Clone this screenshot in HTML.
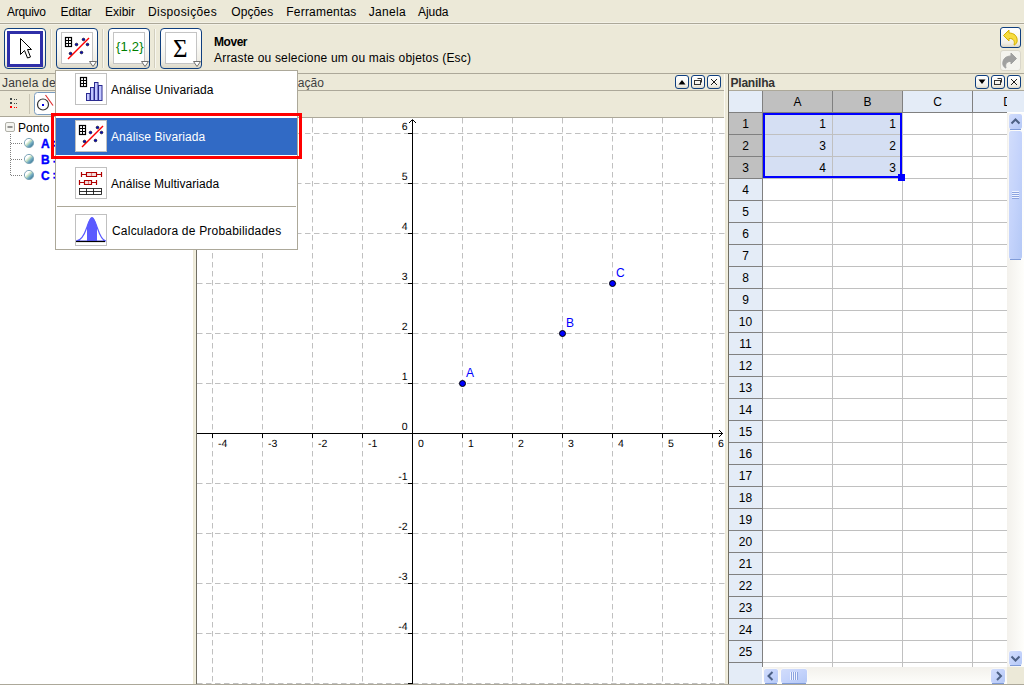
<!DOCTYPE html>
<html><head><meta charset="utf-8"><title>GeoGebra</title>
<style>
html,body{margin:0;padding:0;}
body{width:1024px;height:685px;overflow:hidden;position:relative;background:#ECE9D8;font-family:"Liberation Sans",sans-serif;font-size:12px;color:#000;}
.a{position:absolute;}
.t{position:absolute;white-space:nowrap;line-height:14px;}
svg{position:absolute;left:0;top:0;}
</style></head><body>

<div class="t" style="left:7px;top:5px;letter-spacing:-0.283px;">Arquivo</div>
<div class="t" style="left:60.5px;top:5px;letter-spacing:-0.060px;">Editar</div>
<div class="t" style="left:105px;top:5px;letter-spacing:0.000px;">Exibir</div>
<div class="t" style="left:148px;top:5px;letter-spacing:0.400px;">Disposições</div>
<div class="t" style="left:231.2px;top:5px;letter-spacing:0.120px;">Opções</div>
<div class="t" style="left:286.3px;top:5px;letter-spacing:0.200px;">Ferramentas</div>
<div class="t" style="left:368.8px;top:5px;letter-spacing:0.320px;">Janela</div>
<div class="t" style="left:418px;top:5px;letter-spacing:-0.050px;">Ajuda</div>
<div class="a" style="left:0;top:22px;width:1024px;height:1px;background:#F3F1E6"></div>
<div class="a" style="left:0;top:23px;width:1024px;height:1px;background:#ACA899"></div>
<div class="a" style="left:0;top:24px;width:1024px;height:1px;background:#F3F1E6"></div>
<div class="a" style="left:4px;top:28px;width:40px;height:39px;border:1px solid #0F3F7F;border-radius:4px;background:linear-gradient(#FFFFFF 0%,#FAFAF7 40%,#F0EEE6 80%,#DCD8C8 100%)"></div>
<div class="a" style="left:56px;top:28px;width:40px;height:39px;border:1px solid #0F3F7F;border-radius:4px;background:linear-gradient(#FFFFFF 0%,#FAFAF7 40%,#F0EEE6 80%,#DCD8C8 100%)"></div>
<div class="a" style="left:108px;top:28px;width:40px;height:39px;border:1px solid #0F3F7F;border-radius:4px;background:linear-gradient(#FFFFFF 0%,#FAFAF7 40%,#F0EEE6 80%,#DCD8C8 100%)"></div>
<div class="a" style="left:160px;top:28px;width:40px;height:39px;border:1px solid #0F3F7F;border-radius:4px;background:linear-gradient(#FFFFFF 0%,#FAFAF7 40%,#F0EEE6 80%,#DCD8C8 100%)"></div>
<div class="a" style="left:50px;top:29px;width:1px;height:39px;background:#D2CFBF"></div>
<div class="a" style="left:51px;top:29px;width:1px;height:39px;background:#F8F7F0"></div>
<div class="a" style="left:102px;top:29px;width:1px;height:39px;background:#D2CFBF"></div>
<div class="a" style="left:103px;top:29px;width:1px;height:39px;background:#F8F7F0"></div>
<div class="a" style="left:154px;top:29px;width:1px;height:39px;background:#D2CFBF"></div>
<div class="a" style="left:155px;top:29px;width:1px;height:39px;background:#F8F7F0"></div>
<div class="a" style="left:7px;top:31px;width:30px;height:30px;border:3px solid #2F2FA8;background:#fff"></div>
<svg width="1024" height="685" style="pointer-events:none">
<path d="M20.5,38.5 L20.5,54.5 L24.5,50.5 L27.5,58 L30.5,57 L27.5,49.5 L31.5,49.5 Z" fill="#fff" stroke="#000" stroke-width="1" stroke-linejoin="miter"/>
</svg>
<div class="a" style="left:61px;top:32px;width:30px;height:30px;border:1px solid #C4C4C4;background:#fff"></div>
<div class="a" style="left:113px;top:32px;width:30px;height:30px;border:1px solid #C4C4C4;background:#fff"></div>
<div class="a" style="left:165px;top:32px;width:30px;height:30px;border:1px solid #C4C4C4;background:#fff"></div>
<svg width="1024" height="685"><path d="M89.5,61.5 L96.5,61.5 L93,66.5 Z" fill="#fff" stroke="#707070" stroke-width="1"/><path d="M141.5,61.5 L148.5,61.5 L145,66.5 Z" fill="#fff" stroke="#707070" stroke-width="1"/><path d="M193.5,61.5 L200.5,61.5 L197,66.5 Z" fill="#fff" stroke="#707070" stroke-width="1"/></svg>
<svg width="1024" height="685">
<rect x="65.5" y="37.5" width="6" height="9" fill="#fff" stroke="#000" stroke-width="1.2"/>
<path d="M68.5,37 V47 M65,40.5 H72 M65,43.5 H72" stroke="#000" stroke-width="1"/>
<line x1="68" y1="59" x2="89" y2="38" stroke="#FF0000" stroke-width="1.5"/>
<g fill="#0000C0" stroke="#000" stroke-width="0.6">
<circle cx="70.5" cy="53.5" r="1.35"/><circle cx="76.5" cy="44.5" r="1.35"/><circle cx="83.5" cy="39.5" r="1.35"/><circle cx="87.5" cy="44.5" r="1.35"/><circle cx="81.5" cy="52.5" r="1.35"/>
</g>
</svg>
<div class="t" style="left:116px;top:40px;font-size:13px;color:#008000;letter-spacing:0.2px">{1,2}</div>
<div class="t" style="left:173px;top:35px;font-family:'Liberation Serif',serif;font-size:25px;line-height:28px;color:#000">&#931;</div>
<div class="t" style="left:214px;top:35px;font-weight:bold;letter-spacing:-0.450px;">Mover</div>
<div class="t" style="left:214px;top:51px;letter-spacing:0.202px;">Arraste ou selecione um ou mais objetos (Esc)</div>
<div class="a" style="left:1000px;top:27px;width:19px;height:19px;border:1px solid #0F3F7F;border-radius:3px;background:linear-gradient(#FFFFFF 0%,#FAFAF7 40%,#F0EEE6 80%,#DCD8C8 100%)"></div>
<div class="a" style="left:1000px;top:50px;width:19px;height:19px;border:1px solid #DAD7CB;border-radius:3px;background:#F4F3EE"></div>
<svg width="1024" height="685">
<path d="M1003.5,35.5 L1009,30 L1009,33 C1014,33 1018,36 1017,42 C1016,44 1015,45 1014,45 C1015,42 1014,38 1009,38.5 L1009,41 Z" fill="#F7DC40" stroke="#D4B000" stroke-width="1"/>
<path d="M1016.5,58.5 L1011,53 L1011,56 C1006,56 1002,59 1003,65 C1004,67 1005,68 1006,68 C1005,65 1006,61 1011,61.5 L1011,64 Z" fill="#A0A0A0" stroke="#A0A0A0" stroke-width="1"/>
</svg>
<div class="a" style="left:0px;top:73px;width:1024px;height:1px;background:#ACA899"></div>
<div class="a" style="left:0px;top:90px;width:193px;height:1px;background:#ACA899"></div>
<div class="a" style="left:0px;top:116px;width:193px;height:1px;background:#ACA899"></div>
<div class="a" style="left:0px;top:117px;width:193px;height:567px;background:#FFFFFF"></div>
<div class="a" style="left:193px;top:74px;width:3px;height:610px;background:linear-gradient(90deg,#E9E5D3,#F4F1E1)"></div>
<div class="a" style="left:196px;top:74px;width:1px;height:610px;background:#716F64"></div>
<div class="a" style="left:197px;top:73px;width:528px;height:1px;background:#ACA899"></div>
<div class="a" style="left:197px;top:90px;width:528px;height:1px;background:#ACA899"></div>
<div class="a" style="left:197px;top:117px;width:528px;height:1px;background:#ACA899"></div>
<div class="a" style="left:725px;top:74px;width:3px;height:610px;background:linear-gradient(90deg,#E9E5D3,#F4F1E1)"></div>
<div class="a" style="left:728px;top:74px;width:1px;height:610px;background:#716F64"></div>
<div class="a" style="left:724px;top:74px;width:1px;height:44px;background:#FBFAF4"></div>
<div class="a" style="left:729px;top:73px;width:295px;height:1px;background:#ACA899"></div>
<div class="a" style="left:729px;top:90px;width:295px;height:1px;background:#ACA899"></div>
<div class="a" style="left:0px;top:684px;width:1024px;height:1px;background:#ACA899"></div>
<div class="t" style="left:2px;top:76px;color:#3A3A3A;letter-spacing:0.2px;">Janela de Álgebra</div>
<div class="t" style="left:199px;top:76px;color:#404040;letter-spacing:0.119px;">Janela de Visualização</div>
<div class="t" style="left:730.5px;top:76px;font-weight:bold;color:#333333;letter-spacing:-0.229px;">Planilha</div>
<div class="a" style="left:675px;top:75px;width:12px;height:12px;border:1px solid #0F3F7F;border-radius:3px;background:linear-gradient(#FFFFFF 0%,#FAFAF7 40%,#F0EEE6 80%,#DCD8C8 100%)"></div>
<div class="a" style="left:691px;top:75px;width:12px;height:12px;border:1px solid #0F3F7F;border-radius:3px;background:linear-gradient(#FFFFFF 0%,#FAFAF7 40%,#F0EEE6 80%,#DCD8C8 100%)"></div>
<div class="a" style="left:707px;top:75px;width:12px;height:12px;border:1px solid #0F3F7F;border-radius:3px;background:linear-gradient(#FFFFFF 0%,#FAFAF7 40%,#F0EEE6 80%,#DCD8C8 100%)"></div>
<div class="a" style="left:975px;top:75px;width:12px;height:12px;border:1px solid #0F3F7F;border-radius:3px;background:linear-gradient(#FFFFFF 0%,#FAFAF7 40%,#F0EEE6 80%,#DCD8C8 100%)"></div>
<div class="a" style="left:991px;top:75px;width:12px;height:12px;border:1px solid #0F3F7F;border-radius:3px;background:linear-gradient(#FFFFFF 0%,#FAFAF7 40%,#F0EEE6 80%,#DCD8C8 100%)"></div>
<div class="a" style="left:1007px;top:75px;width:12px;height:12px;border:1px solid #0F3F7F;border-radius:3px;background:linear-gradient(#FFFFFF 0%,#FAFAF7 40%,#F0EEE6 80%,#DCD8C8 100%)"></div>
<svg width="1024" height="685"><path d="M678.5,84.5 L685.5,84.5 L682,80 Z" fill="#000"/><path d="M978.5,79.5 L985.5,79.5 L982,84 Z" fill="#000"/><rect x="694.5" y="80.5" width="6" height="4" fill="none" stroke="#333" stroke-width="1"/><path d="M697.5,78.5 H701.5 V82.5" fill="none" stroke="#333" stroke-width="1"/><rect x="994.5" y="80.5" width="6" height="4" fill="none" stroke="#333" stroke-width="1"/><path d="M997.5,78.5 H1001.5 V82.5" fill="none" stroke="#333" stroke-width="1"/><path d="M711,79 L717,85 M717,79 L711,85" stroke="#000" stroke-width="0.9"/><path d="M1011,79 L1017,85 M1017,79 L1011,85" stroke="#000" stroke-width="0.9"/></svg>
<svg width="1024" height="685"><rect x="197" y="118" width="528" height="566" fill="#fff"/><line x1="212.5" y1="118" x2="212.5" y2="684" stroke="#C0C0C0" stroke-width="1" stroke-dasharray="5.5 3.5"/><line x1="262.5" y1="118" x2="262.5" y2="684" stroke="#C0C0C0" stroke-width="1" stroke-dasharray="5.5 3.5"/><line x1="312.5" y1="118" x2="312.5" y2="684" stroke="#C0C0C0" stroke-width="1" stroke-dasharray="5.5 3.5"/><line x1="362.5" y1="118" x2="362.5" y2="684" stroke="#C0C0C0" stroke-width="1" stroke-dasharray="5.5 3.5"/><line x1="462.5" y1="118" x2="462.5" y2="684" stroke="#C0C0C0" stroke-width="1" stroke-dasharray="5.5 3.5"/><line x1="512.5" y1="118" x2="512.5" y2="684" stroke="#C0C0C0" stroke-width="1" stroke-dasharray="5.5 3.5"/><line x1="562.5" y1="118" x2="562.5" y2="684" stroke="#C0C0C0" stroke-width="1" stroke-dasharray="5.5 3.5"/><line x1="612.5" y1="118" x2="612.5" y2="684" stroke="#C0C0C0" stroke-width="1" stroke-dasharray="5.5 3.5"/><line x1="662.5" y1="118" x2="662.5" y2="684" stroke="#C0C0C0" stroke-width="1" stroke-dasharray="5.5 3.5"/><line x1="712.5" y1="118" x2="712.5" y2="684" stroke="#C0C0C0" stroke-width="1" stroke-dasharray="5.5 3.5"/><line x1="197" y1="683.5" x2="725" y2="683.5" stroke="#C0C0C0" stroke-width="1" stroke-dasharray="5.5 3.5"/><line x1="197" y1="633.5" x2="725" y2="633.5" stroke="#C0C0C0" stroke-width="1" stroke-dasharray="5.5 3.5"/><line x1="197" y1="583.5" x2="725" y2="583.5" stroke="#C0C0C0" stroke-width="1" stroke-dasharray="5.5 3.5"/><line x1="197" y1="533.5" x2="725" y2="533.5" stroke="#C0C0C0" stroke-width="1" stroke-dasharray="5.5 3.5"/><line x1="197" y1="483.5" x2="725" y2="483.5" stroke="#C0C0C0" stroke-width="1" stroke-dasharray="5.5 3.5"/><line x1="197" y1="383.5" x2="725" y2="383.5" stroke="#C0C0C0" stroke-width="1" stroke-dasharray="5.5 3.5"/><line x1="197" y1="333.5" x2="725" y2="333.5" stroke="#C0C0C0" stroke-width="1" stroke-dasharray="5.5 3.5"/><line x1="197" y1="283.5" x2="725" y2="283.5" stroke="#C0C0C0" stroke-width="1" stroke-dasharray="5.5 3.5"/><line x1="197" y1="233.5" x2="725" y2="233.5" stroke="#C0C0C0" stroke-width="1" stroke-dasharray="5.5 3.5"/><line x1="197" y1="183.5" x2="725" y2="183.5" stroke="#C0C0C0" stroke-width="1" stroke-dasharray="5.5 3.5"/><line x1="197" y1="133.5" x2="725" y2="133.5" stroke="#C0C0C0" stroke-width="1" stroke-dasharray="5.5 3.5"/><line x1="197" y1="433.5" x2="723" y2="433.5" stroke="#000" stroke-width="1"/><line x1="412.5" y1="120" x2="412.5" y2="684" stroke="#000" stroke-width="1"/><path d="M409,123 L412.5,119.5 L416,123" fill="none" stroke="#000" stroke-width="1"/><path d="M719,430 L722.5,433.5 L719,437" fill="none" stroke="#000" stroke-width="1"/><line x1="212.5" y1="434" x2="212.5" y2="438" stroke="#000" stroke-width="1"/><line x1="262.5" y1="434" x2="262.5" y2="438" stroke="#000" stroke-width="1"/><line x1="312.5" y1="434" x2="312.5" y2="438" stroke="#000" stroke-width="1"/><line x1="362.5" y1="434" x2="362.5" y2="438" stroke="#000" stroke-width="1"/><line x1="462.5" y1="434" x2="462.5" y2="438" stroke="#000" stroke-width="1"/><line x1="512.5" y1="434" x2="512.5" y2="438" stroke="#000" stroke-width="1"/><line x1="562.5" y1="434" x2="562.5" y2="438" stroke="#000" stroke-width="1"/><line x1="612.5" y1="434" x2="612.5" y2="438" stroke="#000" stroke-width="1"/><line x1="662.5" y1="434" x2="662.5" y2="438" stroke="#000" stroke-width="1"/><line x1="712.5" y1="434" x2="712.5" y2="438" stroke="#000" stroke-width="1"/><line x1="408" y1="683.5" x2="412" y2="683.5" stroke="#000" stroke-width="1"/><line x1="408" y1="633.5" x2="412" y2="633.5" stroke="#000" stroke-width="1"/><line x1="408" y1="583.5" x2="412" y2="583.5" stroke="#000" stroke-width="1"/><line x1="408" y1="533.5" x2="412" y2="533.5" stroke="#000" stroke-width="1"/><line x1="408" y1="483.5" x2="412" y2="483.5" stroke="#000" stroke-width="1"/><line x1="408" y1="383.5" x2="412" y2="383.5" stroke="#000" stroke-width="1"/><line x1="408" y1="333.5" x2="412" y2="333.5" stroke="#000" stroke-width="1"/><line x1="408" y1="283.5" x2="412" y2="283.5" stroke="#000" stroke-width="1"/><line x1="408" y1="233.5" x2="412" y2="233.5" stroke="#000" stroke-width="1"/><line x1="408" y1="183.5" x2="412" y2="183.5" stroke="#000" stroke-width="1"/><line x1="408" y1="133.5" x2="412" y2="133.5" stroke="#000" stroke-width="1"/><g font-family="Liberation Sans" fill="#000" text-rendering="geometricPrecision"><text x="218" y="447" font-size="10.5">-4</text><text x="268" y="447" font-size="10.5">-3</text><text x="318" y="447" font-size="10.5">-2</text><text x="368" y="447" font-size="10.5">-1</text><text x="418" y="447" font-size="10.5">0</text><text x="468" y="447" font-size="10.5">1</text><text x="518" y="447" font-size="10.5">2</text><text x="568" y="447" font-size="10.5">3</text><text x="618" y="447" font-size="10.5">4</text><text x="668" y="447" font-size="10.5">5</text><text x="718" y="447" font-size="10.5">6</text><text x="407.5" y="630" font-size="10.5" text-anchor="end">-4</text><text x="407.5" y="580" font-size="10.5" text-anchor="end">-3</text><text x="407.5" y="530" font-size="10.5" text-anchor="end">-2</text><text x="407.5" y="480" font-size="10.5" text-anchor="end">-1</text><text x="407.5" y="430" font-size="10.5" text-anchor="end">0</text><text x="407.5" y="380" font-size="10.5" text-anchor="end">1</text><text x="407.5" y="330" font-size="10.5" text-anchor="end">2</text><text x="407.5" y="280" font-size="10.5" text-anchor="end">3</text><text x="407.5" y="230" font-size="10.5" text-anchor="end">4</text><text x="407.5" y="180" font-size="10.5" text-anchor="end">5</text><text x="407.5" y="130" font-size="10.5" text-anchor="end">6</text></g><circle cx="462.5" cy="383.5" r="3" fill="#0000FF" stroke="#000" stroke-width="1"/><text x="466.0" y="377.0" font-size="12" font-family="Liberation Sans" fill="#0000FF">A</text><circle cx="562.5" cy="333.5" r="3" fill="#0000FF" stroke="#000" stroke-width="1"/><text x="566.0" y="327.0" font-size="12" font-family="Liberation Sans" fill="#0000FF">B</text><circle cx="612.5" cy="283.5" r="3" fill="#0000FF" stroke="#000" stroke-width="1"/><text x="616.0" y="277.0" font-size="12" font-family="Liberation Sans" fill="#0000FF">C</text></svg>
<svg width="1024" height="685"><defs><clipPath id="hclip"><rect x="973" y="91" width="34" height="21"/></clipPath></defs><rect x="729" y="91" width="295" height="593" fill="#fff"/><rect x="729" y="91" width="34" height="21" fill="#E4ECF7"/><rect x="763" y="91" width="69" height="21" fill="#C0C0C0"/><rect x="833" y="91" width="69" height="21" fill="#C0C0C0"/><rect x="903" y="91" width="69" height="21" fill="#E4ECF7"/><rect x="973" y="91" width="51" height="21" fill="#E4ECF7"/><rect x="729" y="113" width="33" height="571" fill="#E4ECF7"/><rect x="729" y="113" width="33" height="65" fill="#C0C0C0"/><rect x="763" y="113" width="139" height="65" fill="#D5DFF3"/><line x1="763" y1="134.5" x2="1007" y2="134.5" stroke="#C0C0C0" stroke-width="1"/><line x1="729" y1="134.5" x2="762" y2="134.5" stroke="#808080" stroke-width="1"/><line x1="763" y1="156.5" x2="1007" y2="156.5" stroke="#C0C0C0" stroke-width="1"/><line x1="729" y1="156.5" x2="762" y2="156.5" stroke="#808080" stroke-width="1"/><line x1="763" y1="178.5" x2="1007" y2="178.5" stroke="#C0C0C0" stroke-width="1"/><line x1="729" y1="178.5" x2="762" y2="178.5" stroke="#808080" stroke-width="1"/><line x1="763" y1="200.5" x2="1007" y2="200.5" stroke="#C0C0C0" stroke-width="1"/><line x1="729" y1="200.5" x2="762" y2="200.5" stroke="#808080" stroke-width="1"/><line x1="763" y1="222.5" x2="1007" y2="222.5" stroke="#C0C0C0" stroke-width="1"/><line x1="729" y1="222.5" x2="762" y2="222.5" stroke="#808080" stroke-width="1"/><line x1="763" y1="244.5" x2="1007" y2="244.5" stroke="#C0C0C0" stroke-width="1"/><line x1="729" y1="244.5" x2="762" y2="244.5" stroke="#808080" stroke-width="1"/><line x1="763" y1="266.5" x2="1007" y2="266.5" stroke="#C0C0C0" stroke-width="1"/><line x1="729" y1="266.5" x2="762" y2="266.5" stroke="#808080" stroke-width="1"/><line x1="763" y1="288.5" x2="1007" y2="288.5" stroke="#C0C0C0" stroke-width="1"/><line x1="729" y1="288.5" x2="762" y2="288.5" stroke="#808080" stroke-width="1"/><line x1="763" y1="310.5" x2="1007" y2="310.5" stroke="#C0C0C0" stroke-width="1"/><line x1="729" y1="310.5" x2="762" y2="310.5" stroke="#808080" stroke-width="1"/><line x1="763" y1="332.5" x2="1007" y2="332.5" stroke="#C0C0C0" stroke-width="1"/><line x1="729" y1="332.5" x2="762" y2="332.5" stroke="#808080" stroke-width="1"/><line x1="763" y1="354.5" x2="1007" y2="354.5" stroke="#C0C0C0" stroke-width="1"/><line x1="729" y1="354.5" x2="762" y2="354.5" stroke="#808080" stroke-width="1"/><line x1="763" y1="376.5" x2="1007" y2="376.5" stroke="#C0C0C0" stroke-width="1"/><line x1="729" y1="376.5" x2="762" y2="376.5" stroke="#808080" stroke-width="1"/><line x1="763" y1="398.5" x2="1007" y2="398.5" stroke="#C0C0C0" stroke-width="1"/><line x1="729" y1="398.5" x2="762" y2="398.5" stroke="#808080" stroke-width="1"/><line x1="763" y1="420.5" x2="1007" y2="420.5" stroke="#C0C0C0" stroke-width="1"/><line x1="729" y1="420.5" x2="762" y2="420.5" stroke="#808080" stroke-width="1"/><line x1="763" y1="442.5" x2="1007" y2="442.5" stroke="#C0C0C0" stroke-width="1"/><line x1="729" y1="442.5" x2="762" y2="442.5" stroke="#808080" stroke-width="1"/><line x1="763" y1="464.5" x2="1007" y2="464.5" stroke="#C0C0C0" stroke-width="1"/><line x1="729" y1="464.5" x2="762" y2="464.5" stroke="#808080" stroke-width="1"/><line x1="763" y1="486.5" x2="1007" y2="486.5" stroke="#C0C0C0" stroke-width="1"/><line x1="729" y1="486.5" x2="762" y2="486.5" stroke="#808080" stroke-width="1"/><line x1="763" y1="508.5" x2="1007" y2="508.5" stroke="#C0C0C0" stroke-width="1"/><line x1="729" y1="508.5" x2="762" y2="508.5" stroke="#808080" stroke-width="1"/><line x1="763" y1="530.5" x2="1007" y2="530.5" stroke="#C0C0C0" stroke-width="1"/><line x1="729" y1="530.5" x2="762" y2="530.5" stroke="#808080" stroke-width="1"/><line x1="763" y1="552.5" x2="1007" y2="552.5" stroke="#C0C0C0" stroke-width="1"/><line x1="729" y1="552.5" x2="762" y2="552.5" stroke="#808080" stroke-width="1"/><line x1="763" y1="574.5" x2="1007" y2="574.5" stroke="#C0C0C0" stroke-width="1"/><line x1="729" y1="574.5" x2="762" y2="574.5" stroke="#808080" stroke-width="1"/><line x1="763" y1="596.5" x2="1007" y2="596.5" stroke="#C0C0C0" stroke-width="1"/><line x1="729" y1="596.5" x2="762" y2="596.5" stroke="#808080" stroke-width="1"/><line x1="763" y1="618.5" x2="1007" y2="618.5" stroke="#C0C0C0" stroke-width="1"/><line x1="729" y1="618.5" x2="762" y2="618.5" stroke="#808080" stroke-width="1"/><line x1="763" y1="640.5" x2="1007" y2="640.5" stroke="#C0C0C0" stroke-width="1"/><line x1="729" y1="640.5" x2="762" y2="640.5" stroke="#808080" stroke-width="1"/><line x1="763" y1="662.5" x2="1007" y2="662.5" stroke="#C0C0C0" stroke-width="1"/><line x1="729" y1="662.5" x2="762" y2="662.5" stroke="#808080" stroke-width="1"/><line x1="832.5" y1="113" x2="832.5" y2="667" stroke="#C0C0C0" stroke-width="1"/><line x1="832.5" y1="91" x2="832.5" y2="112" stroke="#808080" stroke-width="1"/><line x1="902.5" y1="113" x2="902.5" y2="667" stroke="#C0C0C0" stroke-width="1"/><line x1="902.5" y1="91" x2="902.5" y2="112" stroke="#808080" stroke-width="1"/><line x1="972.5" y1="113" x2="972.5" y2="667" stroke="#C0C0C0" stroke-width="1"/><line x1="972.5" y1="91" x2="972.5" y2="112" stroke="#808080" stroke-width="1"/><line x1="729" y1="112.5" x2="1007" y2="112.5" stroke="#808080" stroke-width="1"/><line x1="762.5" y1="91" x2="762.5" y2="667" stroke="#808080" stroke-width="1"/><g font-family="Liberation Sans" font-size="12" fill="#000"><text x="797.5" y="106" text-anchor="middle">A</text><text x="867.5" y="106" text-anchor="middle">B</text><text x="937.5" y="106" text-anchor="middle">C</text><text x="1007.5" y="106" text-anchor="middle" clip-path="url(#hclip)">D</text><text x="745.5" y="128" text-anchor="middle">1</text><text x="745.5" y="150" text-anchor="middle">2</text><text x="745.5" y="172" text-anchor="middle">3</text><text x="745.5" y="194" text-anchor="middle">4</text><text x="745.5" y="216" text-anchor="middle">5</text><text x="745.5" y="238" text-anchor="middle">6</text><text x="745.5" y="260" text-anchor="middle">7</text><text x="745.5" y="282" text-anchor="middle">8</text><text x="745.5" y="304" text-anchor="middle">9</text><text x="745.5" y="326" text-anchor="middle">10</text><text x="745.5" y="348" text-anchor="middle">11</text><text x="745.5" y="370" text-anchor="middle">12</text><text x="745.5" y="392" text-anchor="middle">13</text><text x="745.5" y="414" text-anchor="middle">14</text><text x="745.5" y="436" text-anchor="middle">15</text><text x="745.5" y="458" text-anchor="middle">16</text><text x="745.5" y="480" text-anchor="middle">17</text><text x="745.5" y="502" text-anchor="middle">18</text><text x="745.5" y="524" text-anchor="middle">19</text><text x="745.5" y="546" text-anchor="middle">20</text><text x="745.5" y="568" text-anchor="middle">21</text><text x="745.5" y="590" text-anchor="middle">22</text><text x="745.5" y="612" text-anchor="middle">23</text><text x="745.5" y="634" text-anchor="middle">24</text><text x="745.5" y="656" text-anchor="middle">25</text><text x="826" y="128" text-anchor="end">1</text><text x="896" y="128" text-anchor="end">1</text><text x="826" y="150" text-anchor="end">3</text><text x="896" y="150" text-anchor="end">2</text><text x="826" y="172" text-anchor="end">4</text><text x="896" y="172" text-anchor="end">3</text></g><rect x="764" y="114" width="137" height="63" fill="none" stroke="#0000FF" stroke-width="2"/><rect x="898" y="174" width="7" height="7" fill="#0000FF"/><defs><linearGradient id="trk" x1="0" y1="0" x2="1" y2="0"><stop offset="0" stop-color="#F3F1EC"/><stop offset="1" stop-color="#FEFEFB"/></linearGradient><linearGradient id="trkh" x1="0" y1="0" x2="0" y2="1"><stop offset="0" stop-color="#F3F1EC"/><stop offset="1" stop-color="#FEFEFB"/></linearGradient><linearGradient id="sbb" x1="0" y1="0" x2="1" y2="1"><stop offset="0" stop-color="#D2DDFB"/><stop offset="0.5" stop-color="#C4D3FB"/><stop offset="1" stop-color="#B4C8F6"/></linearGradient></defs><rect x="1007" y="113" width="17" height="554" fill="url(#trk)"/><rect x="763" y="667" width="244" height="17" fill="url(#trkh)"/><rect x="1007" y="667" width="17" height="17" fill="#ECE9D8"/><rect x="729" y="667" width="33" height="17" fill="#E4ECF7"/><rect x="1008.5" y="113.5" width="14" height="16" rx="2.5" fill="#FFFFFF" opacity="0.9"/><rect x="1009" y="114" width="13" height="15" rx="2" fill="url(#sbb)"/><line x1="1010" y1="129.5" x2="1021" y2="129.5" stroke="#7F9BD8" stroke-width="1"/><rect x="1008.5" y="130.5" width="14" height="129" rx="2.5" fill="#FFFFFF" opacity="0.9"/><rect x="1009" y="131" width="13" height="128" rx="2" fill="url(#sbb)"/><line x1="1010" y1="259.5" x2="1021" y2="259.5" stroke="#7F9BD8" stroke-width="1"/><rect x="1008.5" y="650.5" width="14" height="15" rx="2.5" fill="#FFFFFF" opacity="0.9"/><rect x="1009" y="651" width="13" height="14" rx="2" fill="url(#sbb)"/><line x1="1010" y1="665.5" x2="1021" y2="665.5" stroke="#7F9BD8" stroke-width="1"/><rect x="763.5" y="668.5" width="15" height="15" rx="2.5" fill="#FFFFFF" opacity="0.9"/><rect x="764" y="669" width="14" height="14" rx="2" fill="url(#sbb)"/><line x1="765" y1="683.5" x2="777" y2="683.5" stroke="#7F9BD8" stroke-width="1"/><rect x="780.5" y="668.5" width="27" height="15" rx="2.5" fill="#FFFFFF" opacity="0.9"/><rect x="781" y="669" width="26" height="14" rx="2" fill="url(#sbb)"/><line x1="782" y1="683.5" x2="806" y2="683.5" stroke="#7F9BD8" stroke-width="1"/><rect x="990.5" y="668.5" width="15" height="15" rx="2.5" fill="#FFFFFF" opacity="0.9"/><rect x="991" y="669" width="14" height="14" rx="2" fill="url(#sbb)"/><line x1="992" y1="683.5" x2="1004" y2="683.5" stroke="#7F9BD8" stroke-width="1"/><g fill="none" stroke="#4D6185" stroke-width="2" stroke-linejoin="miter"><path d="M1011.5,123.5 L1015.5,119.5 L1019.5,123.5"/><path d="M1011.5,656.5 L1015.5,660.5 L1019.5,656.5"/><path d="M772.5,672 L768.5,676 L772.5,680"/><path d="M997,672 L1001,676 L997,680"/></g><g stroke="#F0F4FF" stroke-width="1"><line x1="1012" y1="191.5" x2="1019" y2="191.5"/><line x1="1012" y1="193.5" x2="1019" y2="193.5"/><line x1="1012" y1="195.5" x2="1019" y2="195.5"/><line x1="1012" y1="197.5" x2="1019" y2="197.5"/></g><g stroke="#8CA4E0" stroke-width="1"><line x1="1012" y1="192.5" x2="1019" y2="192.5"/><line x1="1012" y1="194.5" x2="1019" y2="194.5"/><line x1="1012" y1="196.5" x2="1019" y2="196.5"/><line x1="1012" y1="198.5" x2="1019" y2="198.5"/></g><g stroke="#F0F4FF" stroke-width="1"><line x1="790.5" y1="672" x2="790.5" y2="680"/><line x1="792.5" y1="672" x2="792.5" y2="680"/><line x1="794.5" y1="672" x2="794.5" y2="680"/><line x1="796.5" y1="672" x2="796.5" y2="680"/></g><g stroke="#8CA4E0" stroke-width="1"><line x1="791.5" y1="672" x2="791.5" y2="680"/><line x1="793.5" y1="672" x2="793.5" y2="680"/><line x1="795.5" y1="672" x2="795.5" y2="680"/><line x1="797.5" y1="672" x2="797.5" y2="680"/></g></svg>
<svg width="1024" height="685">
<g fill="#404848"><rect x="10" y="98" width="2" height="2"/><rect x="10" y="102" width="2" height="2"/>
<rect x="14" y="99" width="1" height="1"/><rect x="16" y="99" width="1" height="1"/>
<rect x="14" y="103" width="1" height="1"/><rect x="16" y="103" width="1" height="1"/></g>
<g fill="#FF0000"><rect x="10" y="106" width="2" height="2"/><rect x="14" y="107" width="1" height="1"/><rect x="16" y="107" width="1" height="1"/></g>
<line x1="29.5" y1="94" x2="29.5" y2="114" stroke="#C9C5B4" stroke-width="1"/>
<rect x="34.5" y="92.5" width="30" height="22" rx="3" fill="#fff" stroke="#7A9CC0" stroke-width="1"/>
<circle cx="43" cy="104.5" r="5.5" fill="none" stroke="#333" stroke-width="1.2"/>
<rect x="42" y="104" width="2" height="2" fill="#0000E0"/>
<line x1="45.5" y1="95" x2="53" y2="105.5" stroke="#E03030" stroke-width="1.2"/>
</svg>
<svg width="1024" height="685">
<rect x="5.5" y="122.5" width="9" height="9" rx="1.5" fill="#F4F4F0" stroke="#B0B0A8" stroke-width="1"/>
<line x1="7.5" y1="127" x2="12.5" y2="127" stroke="#333" stroke-width="1"/>
<g stroke="#808080" stroke-width="1" stroke-dasharray="1 1">
<line x1="10.5" y1="134" x2="10.5" y2="176"/>
<line x1="11" y1="143.5" x2="22" y2="143.5"/>
<line x1="11" y1="159.5" x2="22" y2="159.5"/>
<line x1="11" y1="175.5" x2="22" y2="175.5"/>
</g>
<defs><linearGradient id="ball" x1="0" y1="0" x2="1" y2="1">
<stop offset="0" stop-color="#FFFFFF"/><stop offset="0.33" stop-color="#FFFFFF"/><stop offset="0.48" stop-color="#C4E0C0"/><stop offset="0.62" stop-color="#78B0C4"/><stop offset="0.85" stop-color="#3A7898"/><stop offset="1" stop-color="#2A4A60"/></linearGradient></defs>
<circle cx="29" cy="143" r="4.6" fill="url(#ball)" stroke="#7EA6B8" stroke-width="1"/>
<circle cx="29" cy="159" r="4.6" fill="url(#ball)" stroke="#7EA6B8" stroke-width="1"/>
<circle cx="29" cy="175" r="4.6" fill="url(#ball)" stroke="#7EA6B8" stroke-width="1"/>
</svg>
<div class="t" style="left:18px;top:121px;">Ponto</div>
<div class="t" style="left:41px;top:137px;font-weight:bold;color:#0000FF;-webkit-text-stroke:0.35px #0000FF;">A = (1, 1)</div>
<div class="t" style="left:41px;top:153px;font-weight:bold;color:#0000FF;-webkit-text-stroke:0.35px #0000FF;">B = (3, 2)</div>
<div class="t" style="left:41px;top:169px;font-weight:bold;color:#0000FF;-webkit-text-stroke:0.35px #0000FF;">C = (4, 3)</div>
<div class="a" style="left:55px;top:70px;width:241px;height:178px;border:1px solid #ACA899;background:#fff"></div>
<div class="a" style="left:56px;top:118px;width:241px;height:37px;background:#316AC5"></div>
<div class="a" style="left:51px;top:113px;width:245px;height:40px;border:3px solid #FF0000"></div>
<div class="a" style="left:57px;top:206px;width:239px;height:1px;background:#ACA899"></div>
<div class="a" style="left:75px;top:73px;width:30px;height:30px;border:1px solid #C0C0C0;background:#fff"></div>
<div class="a" style="left:75px;top:120px;width:30px;height:30px;border:1px solid #C0C0C0;background:#fff"></div>
<div class="a" style="left:75px;top:167px;width:30px;height:30px;border:1px solid #C0C0C0;background:#fff"></div>
<div class="a" style="left:75px;top:214px;width:30px;height:30px;border:1px solid #C0C0C0;background:#fff"></div>
<svg width="1024" height="685">
<!-- univariate -->
<rect x="80.5" y="77.5" width="6" height="9" fill="#fff" stroke="#000" stroke-width="1.2"/>
<path d="M83.5,77 V87 M80,80.5 H87 M80,83.5 H87" stroke="#000" stroke-width="1"/>
<g fill="#C4C8FF" stroke="#2A2A90" stroke-width="1">
<rect x="86.5" y="93.5" width="3.5" height="7"/><rect x="90.5" y="87.5" width="3.5" height="13"/>
<rect x="94.5" y="82.5" width="3.5" height="18"/><rect x="98.5" y="85.5" width="3.5" height="15"/></g>
<!-- bivariate -->
<rect x="79.5" y="125.5" width="6" height="9" fill="#fff" stroke="#000" stroke-width="1.2"/>
<path d="M82.5,125 V135 M79,128.5 H86 M79,131.5 H86" stroke="#000" stroke-width="1"/>
<line x1="82" y1="147" x2="103" y2="126" stroke="#FF0000" stroke-width="1.5"/>
<g fill="#0000C0" stroke="#000" stroke-width="0.6">
<circle cx="84.5" cy="141.5" r="1.35"/><circle cx="90.5" cy="132.5" r="1.35"/><circle cx="97.5" cy="127.5" r="1.35"/><circle cx="101.5" cy="132.5" r="1.35"/><circle cx="95.5" cy="140.5" r="1.35"/>
</g>
<!-- multivariate -->
<g stroke="#B00000" stroke-width="1.2" fill="none">
<path d="M81.5,172 V177 M81.5,174.5 H86 M86.5,172.5 H96.5 V176.5 H86.5 Z M91.5,172.5 V176.5 M96.5,174.5 H101.5 M101.5,172 V177"/>
<path d="M79.5,180 V185 M79.5,182.5 H84 M84.5,180.5 H91.5 V184.5 H84.5 Z M88.5,180.5 V184.5 M91.5,182.5 H96.5 M96.5,180 V185"/>
</g>
<g fill="#F0C8C8" opacity="0.6"><rect x="87" y="173" width="9" height="3"/><rect x="85" y="181" width="6" height="3"/></g>
<g stroke="#111" stroke-width="0.85" fill="none">
<rect x="79.5" y="188.5" width="22" height="6"/><path d="M79.5,191.5 H101.5 M86.5,188.5 V194.5 M93.5,188.5 V194.5"/>
</g>
<!-- probability -->
<path d="M76,241 C81,241 84,236 87,227 C89,221 90,217.5 92,217.5 C94,217.5 95,221 97,227 C100,236 103,241 106,241 Z" fill="none" stroke="#5A5AFF" stroke-width="1.2"/>
<path d="M87,227 C89,221 90,217.5 92,217.5 C94,217.5 95,221 97,227 L97,241 L87,241 Z" fill="#5A5AFF"/>
<line x1="76" y1="241.5" x2="105" y2="241.5" stroke="#000" stroke-width="1.2"/>
</svg>
<div class="t" style="left:111px;top:83px;letter-spacing:0.141px;">Análise Univariada</div>
<div class="t" style="left:111px;top:130px;color:#FFFFFF;letter-spacing:0.094px;">Análise Bivariada</div>
<div class="t" style="left:111px;top:177px;letter-spacing:0.037px;">Análise Multivariada</div>
<div class="t" style="left:112px;top:224px;letter-spacing:0.207px;">Calculadora de Probabilidades</div>
</body></html>
